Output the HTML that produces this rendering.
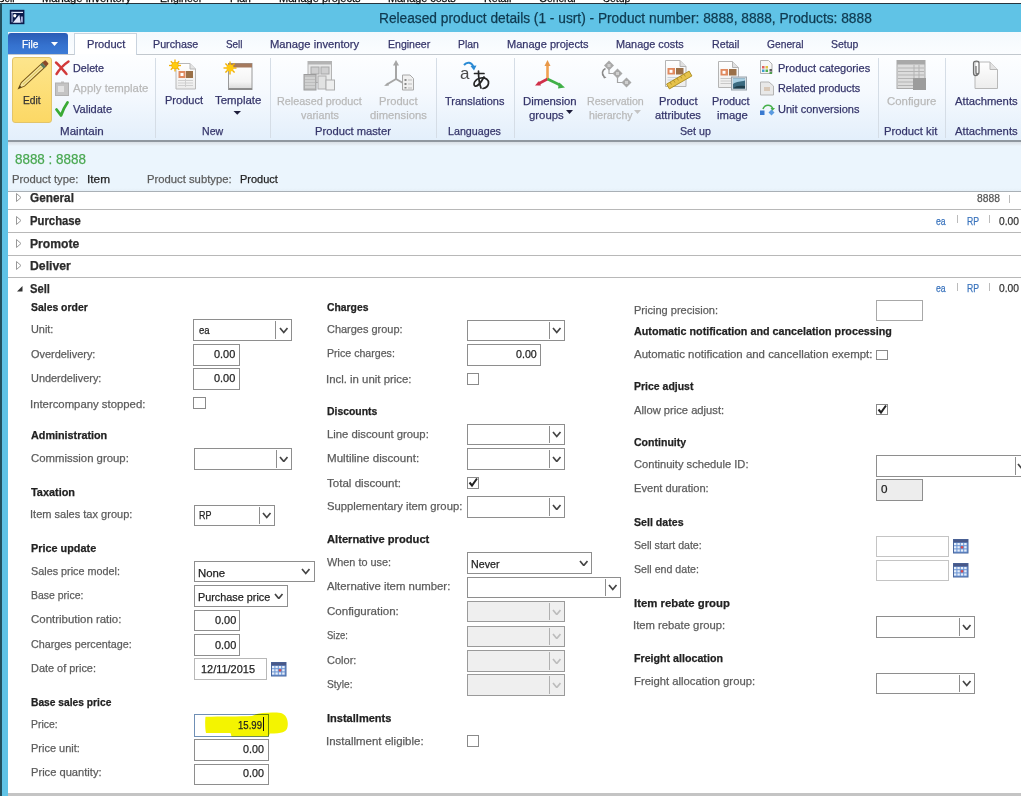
<!DOCTYPE html>
<html><head><meta charset="utf-8">
<style>
html,body{margin:0;padding:0;width:1024px;height:796px;overflow:hidden;background:#fff;position:relative;font-family:"Liberation Sans",sans-serif}
.t{position:absolute;white-space:nowrap;transform-origin:0 0;font-family:"Liberation Sans",sans-serif;-webkit-text-stroke:0.25px currentColor}
.a{position:absolute}
</style></head><body>
<!-- window frame -->
<div class="a" style="left:0;top:3px;width:1021px;height:1px;background:#26343c"></div>
<div class="a" style="left:0;top:4px;width:1021px;height:28px;background:#60c3e6"></div>
<div class="a" style="left:0;top:3px;width:1.5px;height:793px;background:#23505e"></div>
<div class="a" style="left:1.5px;top:4px;width:6px;height:792px;background:#60c3e6"></div>
<!-- tab strip -->
<div class="a" style="left:8px;top:32px;width:1013px;height:23px;background:linear-gradient(#f4f9fd,#fbfdff)"></div>
<div class="a" style="left:8px;top:54px;width:1013px;height:1.5px;background:#c2c8ce"></div>
<!-- ribbon body -->
<div class="a" style="left:8px;top:55px;width:1013px;height:85px;background:linear-gradient(#fdfeff 0%,#f5f9fe 45%,#e3effb 100%)"></div>
<div class="a" style="left:8px;top:140px;width:1013px;height:1.5px;background:#8f979f"></div>
<!-- header -->
<div class="a" style="left:8px;top:141.5px;width:1013px;height:50px;background:linear-gradient(#d9dfe5 0px,#e6eef5 3px,#ebf5fd 4px,#ebf5fd 46px,#e4eef6 50px)"></div>
<div class="a" style="left:8px;top:191px;width:1013px;height:1px;background:#a9b0b6"></div>
<!-- fasttab lines -->
<div class="a" style="left:8px;top:209px;width:1013px;height:1px;background:#b8b8b8"></div>
<div class="a" style="left:8px;top:232px;width:1013px;height:1px;background:#b8b8b8"></div>
<div class="a" style="left:8px;top:254.5px;width:1013px;height:1px;background:#b8b8b8"></div>
<div class="a" style="left:8px;top:277px;width:1013px;height:1px;background:#b8b8b8"></div>
<div class="a" style="left:8px;top:793px;width:1013px;height:3px;background:#c4c4c4"></div>
<!-- File button -->
<div class="a" style="left:8px;top:33px;width:60px;height:21px;background:linear-gradient(#2a5cb6,#3572cf 60%,#3b7ad6);border-radius:3px 3px 0 0"></div>
<svg class="a" style="left:51px;top:42px" width="8" height="5"><polygon points="0,0 7,0 3.5,4" fill="#fff"/></svg>
<!-- Product tab -->
<div class="a" style="left:73.5px;top:33px;width:63px;height:22px;background:#fff;border:1px solid #c9d3de;border-bottom:none;box-sizing:border-box"></div>
<div class="a" style="left:74.5px;top:54px;width:61px;height:2px;background:#fdfeff"></div>
<!-- Edit highlight -->
<div class="a" style="left:12px;top:57px;width:40px;height:66px;box-sizing:border-box;border:1px solid #e2c46a;border-radius:3px;background:linear-gradient(#fde58c,#fcd865)"></div>
<!-- group separators -->
<div class="a" style="left:155px;top:58px;width:1px;height:80px;background:#d5dde6"></div>
<div class="a" style="left:270px;top:58px;width:1px;height:80px;background:#d5dde6"></div>
<div class="a" style="left:436px;top:58px;width:1px;height:80px;background:#d5dde6"></div>
<div class="a" style="left:514px;top:58px;width:1px;height:80px;background:#d5dde6"></div>
<div class="a" style="left:878px;top:58px;width:1px;height:80px;background:#d5dde6"></div>
<div class="a" style="left:945px;top:58px;width:1px;height:80px;background:#d5dde6"></div>
<!-- title icon -->
<div class="a" style="left:10px;top:10px;width:14px;height:14px;background:#0f2347"></div>
<!-- right-side value separators -->
<div class="a" style="left:1008.5px;top:195px;width:1px;height:8px;background:#bbb"></div>
<div class="a" style="left:956.5px;top:215px;width:1px;height:8px;background:#bbb"></div>
<div class="a" style="left:989px;top:215px;width:1px;height:8px;background:#bbb"></div>
<div class="a" style="left:956.5px;top:283px;width:1px;height:8px;background:#bbb"></div>
<div class="a" style="left:989px;top:283px;width:1px;height:8px;background:#bbb"></div>
<!-- triangles -->
<svg class="a" style="left:16px;top:193px" width="6" height="9"><polygon points="0.5,0.5 5,4.5 0.5,8.5" fill="none" stroke="#999"/></svg>
<svg class="a" style="left:16px;top:216px" width="6" height="9"><polygon points="0.5,0.5 5,4.5 0.5,8.5" fill="none" stroke="#999"/></svg>
<svg class="a" style="left:16px;top:238.5px" width="6" height="9"><polygon points="0.5,0.5 5,4.5 0.5,8.5" fill="none" stroke="#999"/></svg>
<svg class="a" style="left:16px;top:261px" width="6" height="9"><polygon points="0.5,0.5 5,4.5 0.5,8.5" fill="none" stroke="#999"/></svg>
<svg class="a" style="left:16.5px;top:286px" width="6" height="6"><polygon points="5.5,0 5.5,5.5 0,5.5" fill="#333"/></svg>
<svg class="a" style="left:0;top:0" width="1024" height="141" viewBox="0 0 1024 141">
<defs>
<linearGradient id="docg" x1="0" y1="0" x2="0" y2="1"><stop offset="0" stop-color="#ffffff"/><stop offset="1" stop-color="#ececec"/></linearGradient>
<linearGradient id="tplg" x1="0" y1="0" x2="0" y2="1"><stop offset="0" stop-color="#ffffff"/><stop offset="0.7" stop-color="#f4f4f4"/><stop offset="1" stop-color="#d8d8d8"/></linearGradient>
<radialGradient id="starg"><stop offset="0" stop-color="#ffd21a"/><stop offset="1" stop-color="#f0a000"/></radialGradient>
</defs>
<!-- title icon -->
<rect x="9.8" y="9.8" width="14.6" height="14.4" fill="#0a1a4a"/>
<rect x="11.5" y="11.8" width="11.5" height="1.2" fill="#e6e9fb"/>
<rect x="11.5" y="11.8" width="1.1" height="10.5" fill="#b4bce4"/>
<circle cx="14.9" cy="15.8" r="1.7" fill="#ffffff"/>
<path d="M16.6,15.8 C16.6,18.5 15,20.5 12.8,21" fill="none" stroke="#0a1a4a" stroke-width="1"/>
<path d="M12.8,22.8 L19.3,14.8 L20.8,22.8 Z" fill="#e4e7fb"/>
<path d="M20.8,16.5 L22.8,16.5 L22.8,22.5 L21.2,22.5 Z" fill="#aab4e0"/>
<!-- pencil -->
<g transform="translate(18.5,88.5) rotate(-43)">
  <path d="M0,0 L6,-2.4 H36 V2.4 H6 Z" fill="#f6e6a0" stroke="#7a5a18" stroke-width="1"/>
  <path d="M0,0 L3,-1.2 V1.2 Z" fill="#4a3a10"/>
  <rect x="32" y="-2.6" width="3" height="5.2" fill="#5a7a60"/>
  <rect x="35" y="-2.6" width="4" height="5.2" rx="1" fill="#8a4a2a"/>
  <line x1="6" y1="0" x2="32" y2="0" stroke="#e0c860" stroke-width="1"/>
</g>
<!-- red X -->
<path d="M56,62.5 C60,66 63,70 66.5,74 M68.5,61.5 C64,64.5 60,68.5 56.5,74" fill="none" stroke="#d23a3a" stroke-width="2.4" stroke-linecap="round"/>
<!-- apply template (disabled) -->
<rect x="55.5" y="83" width="13" height="12.5" fill="#c4c4c4" stroke="#b0b0b0"/>
<rect x="58" y="86" width="6" height="6" fill="#e2e2e2"/>
<rect x="61" y="81.5" width="3" height="2" fill="#bcbcbc"/>
<!-- green check -->
<path d="M56.5,109.5 L61,115.5 C63,110 65,106 67.5,102.5" fill="none" stroke="#3aaa35" stroke-width="2.8" stroke-linecap="round" stroke-linejoin="round"/>
<!-- Product (new) -->
<path d="M176,63.5 H190 L195.5,69 V89 H176 Z" fill="url(#docg)" stroke="#b8b8b8"/>
<path d="M190,63.5 V69 H195.5" fill="#e4e4e4" stroke="#b8b8b8"/>
<rect x="178.5" y="71" width="7" height="7" fill="#e08a60"/>
<rect x="180.5" y="73" width="3" height="3" fill="#fff"/>
<rect x="186" y="71" width="7" height="7" fill="#9a7048"/>
<g stroke="#cfcfcf"><line x1="178" y1="80.5" x2="193" y2="80.5"/><line x1="178" y1="83" x2="193" y2="83"/><line x1="178" y1="85.5" x2="193" y2="85.5"/><line x1="185.5" y1="79" x2="185.5" y2="87"/></g>
<g transform="translate(175,65.5)"><circle r="3.6" fill="url(#starg)"/><g stroke="#f2b000" stroke-width="1.3"><line x1="0" y1="-6" x2="0" y2="6"/><line x1="-6" y1="0" x2="6" y2="0"/><line x1="-4.2" y1="-4.2" x2="4.2" y2="4.2"/><line x1="-4.2" y1="4.2" x2="4.2" y2="-4.2"/></g><circle r="3" fill="#ffcc10"/></g>
<!-- Template -->
<rect x="228.5" y="63.5" width="23.5" height="26" fill="url(#tplg)" stroke="#9a9a9a"/>
<rect x="228.5" y="63.5" width="23.5" height="4" fill="#a57a5e"/>
<rect x="229" y="88" width="23" height="2" fill="#8c8c8c"/>
<g transform="translate(230,68)"><g stroke="#f2b000" stroke-width="1.4"><line x1="0" y1="-6.5" x2="0" y2="6.5"/><line x1="-6.5" y1="0" x2="6.5" y2="0"/><line x1="-4.6" y1="-4.6" x2="4.6" y2="4.6"/><line x1="-4.6" y1="4.6" x2="4.6" y2="-4.6"/></g><circle r="3.6" fill="#ffc810"/></g>
<polygon points="233.5,111 241,111 237.25,114.8" fill="#1e1e3c"/>
<!-- Released product variants (gray) -->
<g opacity="0.85">
<rect x="308" y="61.5" width="23.5" height="21" fill="#e6e6e6" stroke="#a8a8a8"/>
<rect x="308" y="61.5" width="23.5" height="3" fill="#a8a8a8"/>
<rect x="311" y="67" width="8" height="7" fill="#c8c8c8" stroke="#9a9a9a"/>
<rect x="321" y="67" width="8" height="7" fill="#c8c8c8" stroke="#9a9a9a"/>
<rect x="304" y="74.5" width="12" height="15.5" fill="#b4b4b4" stroke="#8c8c8c"/>
<g stroke="#e0e0e0"><line x1="305" y1="78" x2="315" y2="78"/><line x1="305" y1="81" x2="315" y2="81"/><line x1="305" y1="84" x2="315" y2="84"/><line x1="305" y1="87" x2="315" y2="87"/></g>
<rect x="318" y="76" width="8" height="13" fill="#dedede" stroke="#a0a0a0"/>
<rect x="326" y="80" width="8.5" height="10" fill="#ececec" stroke="#a0a0a0"/>
</g>
<!-- Product dimensions (gray) -->
<g fill="none" stroke="#a6a6a6" stroke-width="2">
<line x1="396" y1="79" x2="396" y2="63"/><line x1="396" y1="79" x2="386" y2="85"/><line x1="396" y1="79" x2="403" y2="83"/>
</g>
<polygon points="396,60 393,65.5 399,65.5" fill="#a6a6a6"/>
<path d="M384,86 L388,82.5 L389,85.5 Z" fill="#a6a6a6"/>
<path d="M402.5,75 H410 L413.5,78.5 V90 H402.5 Z" fill="#f0f0f0" stroke="#a8a8a8"/>
<g fill="#8a8a8a"><rect x="404.5" y="79" width="2" height="2"/><rect x="404.5" y="83" width="2" height="2"/><rect x="404.5" y="87" width="2" height="1.5"/></g>
<g stroke="#bdbdbd"><line x1="408" y1="80" x2="412" y2="80"/><line x1="408" y1="84" x2="412" y2="84"/><line x1="408" y1="88" x2="412" y2="88"/></g>
<!-- Translations -->
<text x="460" y="79" font-family="Liberation Sans" font-size="17" fill="#4a4a4a">a</text>
<path d="M464,65 C467,61.5 471.5,62 473.5,67" fill="none" stroke="#2a8ad4" stroke-width="2"/>
<polygon points="470.5,66 476.5,65.5 474,70.5" fill="#2a8ad4"/>
<g fill="none" stroke="#262626" stroke-width="1.7" stroke-linecap="round">
<path d="M474.5,73.5 H484"/>
<path d="M478.5,71 C478.5,77 479,83 481,88"/>
<path d="M484,77 C481,82.5 477,87 475,86 C472.5,84.5 475,78.5 481,78 C486,77.5 489,80 488.5,83.5 C488,86.5 485.5,88 483,88.5"/>
</g>
<!-- Dimension groups -->
<line x1="547.5" y1="79" x2="547.5" y2="64" stroke="#f0a050" stroke-width="2.6"/>
<polygon points="547.5,60 544.5,66 550.5,66" fill="#e89848"/>
<line x1="547.5" y1="79" x2="538" y2="84" stroke="#d0304a" stroke-width="2.6"/>
<polygon points="535,85.5 539,81 541,85.5" fill="#d0304a"/>
<line x1="547.5" y1="79" x2="561" y2="85.5" stroke="#40b048" stroke-width="2.6"/>
<polygon points="565,87.5 559,82.5 558,88.5" fill="#40b048"/>
<!-- Reservation hierarchy (gray) -->
<g fill="none" stroke="#a4a4a4" stroke-width="1.2"><path d="M609,68 V73.5 H615"/><path d="M617.5,77 V82.5 H623"/></g>
<g fill="#a8a8a8"><polygon points="609,60.5 614,65.5 609,70.5 604,65.5"/><polygon points="617.5,68.5 622.5,73.5 617.5,78.5 612.5,73.5"/><polygon points="626.5,77.5 631.5,82.5 626.5,87.5 621.5,82.5"/></g>
<g fill="#cfcfcf"><rect x="607.5" y="64" width="3" height="3"/><rect x="616" y="72" width="3" height="3"/><rect x="625" y="81" width="3" height="3"/></g>
<path d="M605.5,68.5 C602,70 601.5,74 604,76" fill="none" stroke="#8a8a8a" stroke-width="1.6"/>
<polygon points="602,74.5 606.5,77.5 604,78.5" fill="#8a8a8a"/>
<!-- Product attributes -->
<path d="M665.5,60.5 H680 L686,66.5 V86.5 H665.5 Z" fill="url(#docg)" stroke="#b4b4b4"/>
<path d="M680,60.5 V66.5 H686" fill="#e0e0e0" stroke="#b4b4b4"/>
<rect x="667.5" y="68" width="7.5" height="6.5" fill="#e08a60"/>
<rect x="669.5" y="69.8" width="3" height="3" fill="#fff"/>
<rect x="676" y="68" width="7.5" height="6.5" fill="#9a7048"/>
<g stroke="#c8d2dc"><line x1="667.5" y1="77.5" x2="683" y2="77.5"/><line x1="667.5" y1="80" x2="683" y2="80"/></g>
<g transform="translate(668,86.5) rotate(-30)"><rect x="0" y="-2.8" width="26" height="5.6" fill="#e6c24a" stroke="#a88a20" stroke-width="0.8"/><g stroke="#9a7a20" stroke-width="0.6"><line x1="4" y1="-2.8" x2="4" y2="0"/><line x1="8" y1="-2.8" x2="8" y2="0"/><line x1="12" y1="-2.8" x2="12" y2="0"/><line x1="16" y1="-2.8" x2="16" y2="0"/><line x1="20" y1="-2.8" x2="20" y2="0"/></g></g>
<!-- Product image -->
<path d="M718.5,61.5 H732.5 L738.5,67.5 V87.5 H718.5 Z" fill="url(#docg)" stroke="#b4b4b4"/>
<path d="M732.5,61.5 V67.5 H738.5" fill="#e0e0e0" stroke="#b4b4b4"/>
<rect x="720.5" y="69" width="7.5" height="6.5" fill="#e08a60"/>
<rect x="722.5" y="70.8" width="3" height="3" fill="#fff"/>
<rect x="729" y="69" width="7.5" height="6.5" fill="#9a7048"/>
<g stroke="#c8c8c8"><line x1="720.5" y1="78.5" x2="731" y2="78.5"/><line x1="720.5" y1="81" x2="731" y2="81"/><line x1="720.5" y1="83.5" x2="731" y2="83.5"/></g>
<rect x="731.5" y="77" width="15" height="13" fill="#d4dde4" stroke="#9aa4ac"/>
<rect x="733" y="78.5" width="12" height="10" fill="#3a6a80"/>
<path d="M733,84 C737,81 740,82 745,80.5 V78.5 H733 Z" fill="#a8d0e4"/>
<path d="M733,88.5 C736,85 741,85.5 745,86 V88.5 Z" fill="#1e3e4c"/>
<!-- small icons -->
<path d="M760.5,60.5 H768.5 L772,64 V73.5 H760.5 Z" fill="#f6f6f6" stroke="#b0b0b0"/>
<rect x="762" y="66" width="2.5" height="2.5" fill="#e06060"/><rect x="765.5" y="66" width="2.5" height="2.5" fill="#e0c040"/>
<rect x="762" y="69.5" width="2.5" height="2.5" fill="#40a0d0"/><rect x="765.5" y="69.5" width="2.5" height="2.5" fill="#50b050"/>
<rect x="769.5" y="69" width="2.5" height="2.5" fill="#606060"/><rect x="769.5" y="72" width="2.5" height="2" fill="#50a050"/>
<path d="M760.5,82 H769 L773.5,86 V95 H760.5 Z" fill="#e8e8e8" stroke="#b4b4b4"/>
<rect x="764" y="87" width="6" height="4" fill="#d8c8b8"/>
<path d="M763,109 C765,104 771,104 773,109" fill="none" stroke="#46b04a" stroke-width="1.6"/>
<polygon points="770.5,108 775,108 772.5,111" fill="#46b04a"/>
<rect x="760" y="110.5" width="4.5" height="4.5" fill="#3a7ad0"/>
<polygon points="771.5,109.5 774.5,112.5 771.5,115.5 768.5,112.5" fill="#5a9ae0"/>
<!-- Configure (gray) -->
<rect x="897" y="60.5" width="28" height="28" fill="#dcdcdc" stroke="#a8a8a8"/>
<rect x="897" y="60.5" width="28" height="4" fill="#a8a8a8"/>
<g stroke="#b4b4b4"><line x1="898" y1="68" x2="924" y2="68"/><line x1="898" y1="71.5" x2="924" y2="71.5"/><line x1="898" y1="75" x2="924" y2="75"/><line x1="898" y1="78.5" x2="924" y2="78.5"/><line x1="898" y1="82" x2="924" y2="82"/><line x1="898" y1="85.5" x2="924" y2="85.5"/><line x1="914" y1="65" x2="914" y2="88"/><line x1="919" y1="65" x2="919" y2="88"/></g>
<rect x="913" y="78" width="13" height="12" fill="#9c9c9c"/>
<!-- Attachments -->
<path d="M975,62 H990 L997.5,69.5 V88.5 H975 Z" fill="url(#docg)" stroke="#b8b8b8"/>
<path d="M990,62 V69.5 H997.5" fill="#e4e4e4" stroke="#b8b8b8"/>
<path d="M976,66 V72 C976,75 979,75 979,72 V63 C979,60.5 974,60.5 973.5,63 V73 C973.5,76.5 978,76.5 978,73" fill="none" stroke="#6e6e6e" stroke-width="1.2"/>
</svg>

<svg class="a" style="left:565.5px;top:110px" width="8" height="5"><polygon points="0,0 7,0 3.5,4" fill="#1e1e3c"/></svg>
<svg class="a" style="left:634px;top:110px" width="8" height="5"><polygon points="0,0 7,0 3.5,4" fill="#c4c4c4"/></svg>
<div style="position:absolute;left:193.4px;top:319.4px;width:96.3px;height:20.1px;border:1px solid #8e8e8e;background:#fff"></div>
<div style="position:absolute;left:275.4px;top:321.4px;width:1px;height:18.1px;background:#8e8e8e"></div>
<svg style="position:absolute;left:278.8px;top:327.2px" width="9.5" height="6.5"><polyline points="1,1 4.75,5.5 8.5,1" fill="none" stroke="#444" stroke-width="1.7"/></svg>
<div style="position:absolute;left:193.4px;top:343.6px;width:45.0px;height:20.4px;border:1px solid #8e8e8e;background:#fff"></div>
<div style="position:absolute;left:193.4px;top:368.0px;width:45.0px;height:20.2px;border:1px solid #8e8e8e;background:#fff"></div>
<div style="position:absolute;left:193.4px;top:397.0px;width:10.5px;height:10.3px;border:1px solid #8a8a8a;background:#fff"></div>
<div style="position:absolute;left:193.5px;top:448.4px;width:96.4px;height:19.4px;border:1px solid #8e8e8e;background:#fff"></div>
<div style="position:absolute;left:275.5px;top:450.4px;width:1px;height:17.4px;background:#8e8e8e"></div>
<svg style="position:absolute;left:278.9px;top:455.9px" width="9.5" height="6.5"><polyline points="1,1 4.75,5.5 8.5,1" fill="none" stroke="#444" stroke-width="1.7"/></svg>
<div style="position:absolute;left:193.5px;top:505.0px;width:79.5px;height:19.0px;border:1px solid #8e8e8e;background:#fff"></div>
<div style="position:absolute;left:258.8px;top:507.0px;width:1px;height:17.0px;background:#8e8e8e"></div>
<svg style="position:absolute;left:262.1px;top:512.2px" width="9.5" height="6.5"><polyline points="1,1 4.75,5.5 8.5,1" fill="none" stroke="#444" stroke-width="1.7"/></svg>
<div style="position:absolute;left:193.5px;top:560.8px;width:119.0px;height:19.7px;border:1px solid #8e8e8e;background:#fff"></div>
<svg style="position:absolute;left:300.8px;top:568.4px" width="9.5" height="6.5"><polyline points="1,1 4.75,5.5 8.5,1" fill="none" stroke="#444" stroke-width="1.7"/></svg>
<div style="position:absolute;left:193.5px;top:585.4px;width:92.5px;height:19.4px;border:1px solid #8e8e8e;background:#fff"></div>
<svg style="position:absolute;left:274.2px;top:592.8px" width="9.5" height="6.5"><polyline points="1,1 4.75,5.5 8.5,1" fill="none" stroke="#444" stroke-width="1.7"/></svg>
<div style="position:absolute;left:193.5px;top:609.7px;width:44.8px;height:19.4px;border:1px solid #8e8e8e;background:#fff"></div>
<div style="position:absolute;left:193.5px;top:634.0px;width:44.8px;height:19.7px;border:1px solid #8e8e8e;background:#fff"></div>
<div style="position:absolute;left:193.5px;top:658.0px;width:71.2px;height:20.0px;border:1px solid #b8b8b8;background:#fff"></div>
<div style="position:absolute;left:193.5px;top:714.3px;width:73.0px;height:20.6px;border:1px solid #6f8fb5;background:transparent"></div>
<svg style="position:absolute;left:0;top:0;mix-blend-mode:multiply" width="300" height="745"><path d="M205.5,716.8 C220,716.5 240,716.5 252,716 C258,712.5 272,712 281,713 C287,715 288.5,721 287.5,727 C286.5,732 282,733.5 270,733.5 L268.5,736.5 L231.5,736.5 L230.5,733 L206,733 C205,729 205,721 205.5,716.8 Z" fill="#f4f400"/></svg>
<div style="position:absolute;left:262.5px;top:717.0px;width:1px;height:14.0px;background:#111"></div>
<div style="position:absolute;left:193.5px;top:739.2px;width:73.0px;height:19.4px;border:1px solid #8e8e8e;background:#fff"></div>
<div style="position:absolute;left:193.5px;top:763.5px;width:73.0px;height:19.7px;border:1px solid #8e8e8e;background:#fff"></div>
<div style="position:absolute;left:466.8px;top:319.6px;width:96.2px;height:19.9px;border:1px solid #8e8e8e;background:#fff"></div>
<div style="position:absolute;left:549.0px;top:321.6px;width:1px;height:17.9px;background:#8e8e8e"></div>
<svg style="position:absolute;left:552.2px;top:327.3px" width="9.5" height="6.5"><polyline points="1,1 4.75,5.5 8.5,1" fill="none" stroke="#444" stroke-width="1.7"/></svg>
<div style="position:absolute;left:466.8px;top:344.0px;width:72.6px;height:19.6px;border:1px solid #8e8e8e;background:#fff"></div>
<div style="position:absolute;left:466.8px;top:373.0px;width:10.4px;height:9.6px;border:1px solid #8a8a8a;background:#fff"></div>
<div style="position:absolute;left:466.8px;top:423.9px;width:96.2px;height:19.6px;border:1px solid #8e8e8e;background:#fff"></div>
<div style="position:absolute;left:549.0px;top:425.9px;width:1px;height:17.6px;background:#8e8e8e"></div>
<svg style="position:absolute;left:552.2px;top:431.4px" width="9.5" height="6.5"><polyline points="1,1 4.75,5.5 8.5,1" fill="none" stroke="#444" stroke-width="1.7"/></svg>
<div style="position:absolute;left:466.8px;top:448.0px;width:96.2px;height:19.6px;border:1px solid #8e8e8e;background:#fff"></div>
<div style="position:absolute;left:549.0px;top:450.0px;width:1px;height:17.6px;background:#8e8e8e"></div>
<svg style="position:absolute;left:552.2px;top:455.6px" width="9.5" height="6.5"><polyline points="1,1 4.75,5.5 8.5,1" fill="none" stroke="#444" stroke-width="1.7"/></svg>
<div style="position:absolute;left:466.8px;top:477.0px;width:10.4px;height:9.6px;border:1px solid #8a8a8a;background:#fff"></div>
<svg style="position:absolute;left:466.8px;top:476.0px" width="13" height="13"><polyline points="2.5,6.5 5,9.5 10,2.5" fill="none" stroke="#222" stroke-width="2"/></svg>
<div style="position:absolute;left:466.8px;top:496.3px;width:96.2px;height:19.5px;border:1px solid #8e8e8e;background:#fff"></div>
<div style="position:absolute;left:549.0px;top:498.3px;width:1px;height:17.5px;background:#8e8e8e"></div>
<svg style="position:absolute;left:552.2px;top:503.8px" width="9.5" height="6.5"><polyline points="1,1 4.75,5.5 8.5,1" fill="none" stroke="#444" stroke-width="1.7"/></svg>
<div style="position:absolute;left:466.8px;top:552.2px;width:123.7px;height:19.8px;border:1px solid #8e8e8e;background:#fff"></div>
<svg style="position:absolute;left:578.8px;top:559.9px" width="9.5" height="6.5"><polyline points="1,1 4.75,5.5 8.5,1" fill="none" stroke="#444" stroke-width="1.7"/></svg>
<div style="position:absolute;left:466.8px;top:576.5px;width:152.4px;height:19.8px;border:1px solid #8e8e8e;background:#fff"></div>
<div style="position:absolute;left:604.6px;top:578.5px;width:1px;height:17.8px;background:#8e8e8e"></div>
<svg style="position:absolute;left:608.2px;top:584.1px" width="9.5" height="6.5"><polyline points="1,1 4.75,5.5 8.5,1" fill="none" stroke="#444" stroke-width="1.7"/></svg>
<div style="position:absolute;left:466.8px;top:601.3px;width:95.8px;height:19.2px;border:1px solid #9a9a9a;background:#efefef"></div>
<div style="position:absolute;left:548.6px;top:603.3px;width:1px;height:17.2px;background:#b0b0b0"></div>
<svg style="position:absolute;left:551.9px;top:608.6px" width="9.5" height="6.5"><polyline points="1,1 4.75,5.5 8.5,1" fill="none" stroke="#bdbdbd" stroke-width="1.7"/></svg>
<div style="position:absolute;left:466.8px;top:625.5px;width:95.8px;height:19.2px;border:1px solid #9a9a9a;background:#efefef"></div>
<div style="position:absolute;left:548.6px;top:627.5px;width:1px;height:17.2px;background:#b0b0b0"></div>
<svg style="position:absolute;left:551.9px;top:632.9px" width="9.5" height="6.5"><polyline points="1,1 4.75,5.5 8.5,1" fill="none" stroke="#bdbdbd" stroke-width="1.7"/></svg>
<div style="position:absolute;left:466.8px;top:650.0px;width:95.8px;height:19.8px;border:1px solid #9a9a9a;background:#efefef"></div>
<div style="position:absolute;left:548.6px;top:652.0px;width:1px;height:17.8px;background:#b0b0b0"></div>
<svg style="position:absolute;left:551.9px;top:657.6px" width="9.5" height="6.5"><polyline points="1,1 4.75,5.5 8.5,1" fill="none" stroke="#bdbdbd" stroke-width="1.7"/></svg>
<div style="position:absolute;left:466.8px;top:674.2px;width:95.8px;height:19.8px;border:1px solid #9a9a9a;background:#efefef"></div>
<div style="position:absolute;left:548.6px;top:676.2px;width:1px;height:17.8px;background:#b0b0b0"></div>
<svg style="position:absolute;left:551.9px;top:681.9px" width="9.5" height="6.5"><polyline points="1,1 4.75,5.5 8.5,1" fill="none" stroke="#bdbdbd" stroke-width="1.7"/></svg>
<div style="position:absolute;left:466.8px;top:735.4px;width:10.2px;height:10.1px;border:1px solid #8a8a8a;background:#fff"></div>
<div style="position:absolute;left:876.3px;top:299.7px;width:44.9px;height:19.5px;border:1px solid #a8a8a8;background:#fff"></div>
<div style="position:absolute;left:876.3px;top:349.6px;width:9.5px;height:8.6px;border:1px solid #8a8a8a;background:#fff"></div>
<div style="position:absolute;left:876.3px;top:404.4px;width:9.7px;height:8.6px;border:1px solid #8a8a8a;background:#fff"></div>
<svg style="position:absolute;left:876.3px;top:403.4px" width="13" height="13"><polyline points="2.5,6.5 5,9.5 10,2.5" fill="none" stroke="#222" stroke-width="2"/></svg>
<div style="position:absolute;left:876.4px;top:455.0px;width:151.6px;height:19.5px;border:1px solid #8e8e8e;background:#fff"></div>
<div style="position:absolute;left:1014.7px;top:457.0px;width:1px;height:17.5px;background:#8e8e8e"></div>
<svg style="position:absolute;left:1016.8px;top:462.8px" width="9.5" height="6.5"><polyline points="1,1 4.75,5.5 8.5,1" fill="none" stroke="#444" stroke-width="1.7"/></svg>
<div style="position:absolute;left:876.4px;top:478.5px;width:44.7px;height:20.5px;border:1px solid #8e8e8e;background:#ededed"></div>
<div style="position:absolute;left:876.4px;top:535.7px;width:70.8px;height:19.5px;border:1px solid #c4c4c4;background:#fff"></div>
<div style="position:absolute;left:876.4px;top:559.5px;width:70.8px;height:19.5px;border:1px solid #c4c4c4;background:#fff"></div>
<div style="position:absolute;left:876.4px;top:616.2px;width:96.2px;height:19.4px;border:1px solid #8e8e8e;background:#fff"></div>
<div style="position:absolute;left:959.0px;top:618.2px;width:1px;height:17.4px;background:#8e8e8e"></div>
<svg style="position:absolute;left:962.0px;top:623.7px" width="9.5" height="6.5"><polyline points="1,1 4.75,5.5 8.5,1" fill="none" stroke="#444" stroke-width="1.7"/></svg>
<div style="position:absolute;left:876.4px;top:672.7px;width:96.2px;height:19.4px;border:1px solid #8e8e8e;background:#fff"></div>
<div style="position:absolute;left:959.0px;top:674.7px;width:1px;height:17.4px;background:#8e8e8e"></div>
<svg style="position:absolute;left:962.0px;top:680.2px" width="9.5" height="6.5"><polyline points="1,1 4.75,5.5 8.5,1" fill="none" stroke="#444" stroke-width="1.7"/></svg>
<svg style="position:absolute;left:270.9px;top:662.2px" width="16" height="15"><rect x="0.5" y="0.5" width="14.5" height="13.5" fill="#6a94d4" stroke="#4a68a0" stroke-width="1"/><rect x="0.5" y="0.5" width="14.5" height="3" fill="#485888"/><rect x="1.0" y="4.0" width="2.4" height="2.2" fill="#e6eef9"/><rect x="1.0" y="7.2" width="2.4" height="2.2" fill="#e6eef9"/><rect x="1.0" y="10.4" width="2.4" height="2.2" fill="#e6eef9"/><rect x="4.4" y="4.0" width="2.4" height="2.2" fill="#e6eef9"/><rect x="4.4" y="7.2" width="2.4" height="2.2" fill="#e6eef9"/><rect x="4.4" y="10.4" width="2.4" height="2.2" fill="#e6eef9"/><rect x="7.8" y="4.0" width="2.4" height="2.2" fill="#e6eef9"/><rect x="7.8" y="7.2" width="2.4" height="2.2" fill="#e04848"/><rect x="7.8" y="10.4" width="2.4" height="2.2" fill="#e6eef9"/><rect x="11.2" y="4.0" width="2.4" height="2.2" fill="#e6eef9"/><rect x="11.2" y="7.2" width="2.4" height="2.2" fill="#e6eef9"/><rect x="11.2" y="10.4" width="2.4" height="2.2" fill="#e6eef9"/></svg>
<svg style="position:absolute;left:952.6px;top:538.6px" width="16" height="15"><rect x="0.5" y="0.5" width="14.5" height="13.5" fill="#6a94d4" stroke="#4a68a0" stroke-width="1"/><rect x="0.5" y="0.5" width="14.5" height="3" fill="#485888"/><rect x="1.0" y="4.0" width="2.4" height="2.2" fill="#e6eef9"/><rect x="1.0" y="7.2" width="2.4" height="2.2" fill="#e6eef9"/><rect x="1.0" y="10.4" width="2.4" height="2.2" fill="#e6eef9"/><rect x="4.4" y="4.0" width="2.4" height="2.2" fill="#e6eef9"/><rect x="4.4" y="7.2" width="2.4" height="2.2" fill="#e6eef9"/><rect x="4.4" y="10.4" width="2.4" height="2.2" fill="#e6eef9"/><rect x="7.8" y="4.0" width="2.4" height="2.2" fill="#e6eef9"/><rect x="7.8" y="7.2" width="2.4" height="2.2" fill="#e04848"/><rect x="7.8" y="10.4" width="2.4" height="2.2" fill="#e6eef9"/><rect x="11.2" y="4.0" width="2.4" height="2.2" fill="#e6eef9"/><rect x="11.2" y="7.2" width="2.4" height="2.2" fill="#e6eef9"/><rect x="11.2" y="10.4" width="2.4" height="2.2" fill="#e6eef9"/></svg>
<svg style="position:absolute;left:952.6px;top:562.6px" width="16" height="15"><rect x="0.5" y="0.5" width="14.5" height="13.5" fill="#6a94d4" stroke="#4a68a0" stroke-width="1"/><rect x="0.5" y="0.5" width="14.5" height="3" fill="#485888"/><rect x="1.0" y="4.0" width="2.4" height="2.2" fill="#e6eef9"/><rect x="1.0" y="7.2" width="2.4" height="2.2" fill="#e6eef9"/><rect x="1.0" y="10.4" width="2.4" height="2.2" fill="#e6eef9"/><rect x="4.4" y="4.0" width="2.4" height="2.2" fill="#e6eef9"/><rect x="4.4" y="7.2" width="2.4" height="2.2" fill="#e6eef9"/><rect x="4.4" y="10.4" width="2.4" height="2.2" fill="#e6eef9"/><rect x="7.8" y="4.0" width="2.4" height="2.2" fill="#e6eef9"/><rect x="7.8" y="7.2" width="2.4" height="2.2" fill="#e04848"/><rect x="7.8" y="10.4" width="2.4" height="2.2" fill="#e6eef9"/><rect x="11.2" y="4.0" width="2.4" height="2.2" fill="#e6eef9"/><rect x="11.2" y="7.2" width="2.4" height="2.2" fill="#e6eef9"/><rect x="11.2" y="10.4" width="2.4" height="2.2" fill="#e6eef9"/></svg>
<div class="t" style="left:-2.40px;top:-6.93px;font-size:11.5px;line-height:11.5px;font-weight:normal;color:#000;transform:scaleX(0.8592);">Sell</div>
<div class="t" style="left:42.30px;top:-6.93px;font-size:11.5px;line-height:11.5px;font-weight:normal;color:#000;transform:scaleX(0.9753);">Manage inventory</div>
<div class="t" style="left:159.60px;top:-6.93px;font-size:11.5px;line-height:11.5px;font-weight:normal;color:#000;transform:scaleX(0.9177);">Engineer</div>
<div class="t" style="left:230.00px;top:-6.93px;font-size:11.5px;line-height:11.5px;font-weight:normal;color:#000;transform:scaleX(0.9062);">Plan</div>
<div class="t" style="left:279.00px;top:-6.93px;font-size:11.5px;line-height:11.5px;font-weight:normal;color:#000;transform:scaleX(0.9587);">Manage projects</div>
<div class="t" style="left:388.00px;top:-6.93px;font-size:11.5px;line-height:11.5px;font-weight:normal;color:#000;transform:scaleX(0.9465);">Manage costs</div>
<div class="t" style="left:484.00px;top:-6.93px;font-size:11.5px;line-height:11.5px;font-weight:normal;color:#000;transform:scaleX(0.9273);">Retail</div>
<div class="t" style="left:539.00px;top:-6.93px;font-size:11.5px;line-height:11.5px;font-weight:normal;color:#000;transform:scaleX(0.8920);">General</div>
<div class="t" style="left:603.00px;top:-6.93px;font-size:11.5px;line-height:11.5px;font-weight:normal;color:#000;transform:scaleX(0.9104);">Setup</div>
<div class="t" style="left:379.02px;top:10.75px;font-size:14px;line-height:14px;font-weight:normal;color:#0f3a50;transform:scaleX(0.9802);">Released product details (1 - usrt) - Product number: 8888, 8888, Products: 8888</div>
<div class="t" style="left:22.00px;top:39.27px;font-size:11.5px;line-height:11.5px;font-weight:normal;color:#ffffff;transform:scaleX(0.8823);">File</div>
<div class="t" style="left:87.00px;top:39.27px;font-size:11.5px;line-height:11.5px;font-weight:normal;color:#35356a;transform:scaleX(0.9645);">Product</div>
<div class="t" style="left:153.40px;top:39.27px;font-size:11.5px;line-height:11.5px;font-weight:normal;color:#35356a;transform:scaleX(0.9318);">Purchase</div>
<div class="t" style="left:225.60px;top:39.27px;font-size:11.5px;line-height:11.5px;font-weight:normal;color:#35356a;transform:scaleX(0.8592);">Sell</div>
<div class="t" style="left:270.30px;top:39.27px;font-size:11.5px;line-height:11.5px;font-weight:normal;color:#35356a;transform:scaleX(0.9753);">Manage inventory</div>
<div class="t" style="left:387.60px;top:39.27px;font-size:11.5px;line-height:11.5px;font-weight:normal;color:#35356a;transform:scaleX(0.9177);">Engineer</div>
<div class="t" style="left:458.00px;top:39.27px;font-size:11.5px;line-height:11.5px;font-weight:normal;color:#35356a;transform:scaleX(0.9062);">Plan</div>
<div class="t" style="left:507.00px;top:39.27px;font-size:11.5px;line-height:11.5px;font-weight:normal;color:#35356a;transform:scaleX(0.9587);">Manage projects</div>
<div class="t" style="left:616.00px;top:39.27px;font-size:11.5px;line-height:11.5px;font-weight:normal;color:#35356a;transform:scaleX(0.9465);">Manage costs</div>
<div class="t" style="left:712.00px;top:39.27px;font-size:11.5px;line-height:11.5px;font-weight:normal;color:#35356a;transform:scaleX(0.9273);">Retail</div>
<div class="t" style="left:767.00px;top:39.27px;font-size:11.5px;line-height:11.5px;font-weight:normal;color:#35356a;transform:scaleX(0.8920);">General</div>
<div class="t" style="left:831.00px;top:39.27px;font-size:11.5px;line-height:11.5px;font-weight:normal;color:#35356a;transform:scaleX(0.9104);">Setup</div>
<div class="t" style="left:23.00px;top:95.47px;font-size:11.5px;line-height:11.5px;font-weight:normal;color:#333;transform:scaleX(0.8923);">Edit</div>
<div class="t" style="left:72.70px;top:63.17px;font-size:11.5px;line-height:11.5px;font-weight:normal;color:#35356a;transform:scaleX(0.9347);">Delete</div>
<div class="t" style="left:73.00px;top:82.97px;font-size:11.5px;line-height:11.5px;font-weight:normal;color:#b9b9b9;transform:scaleX(0.9911);">Apply template</div>
<div class="t" style="left:73.00px;top:103.77px;font-size:11.5px;line-height:11.5px;font-weight:normal;color:#35356a;transform:scaleX(0.9601);">Validate</div>
<div class="t" style="left:59.70px;top:126.27px;font-size:11.5px;line-height:11.5px;font-weight:normal;color:#35356a;transform:scaleX(1.0053);">Maintain</div>
<div class="t" style="left:164.80px;top:95.47px;font-size:11.5px;line-height:11.5px;font-weight:normal;color:#35356a;transform:scaleX(0.9595);">Product</div>
<div class="t" style="left:215.30px;top:95.47px;font-size:11.5px;line-height:11.5px;font-weight:normal;color:#35356a;transform:scaleX(0.9932);">Template</div>
<div class="t" style="left:201.60px;top:126.27px;font-size:11.5px;line-height:11.5px;font-weight:normal;color:#35356a;transform:scaleX(0.9198);">New</div>
<div class="t" style="left:277.30px;top:95.87px;font-size:11.5px;line-height:11.5px;font-weight:normal;color:#b9b9b9;transform:scaleX(0.9401);">Released product</div>
<div class="t" style="left:300.60px;top:109.77px;font-size:11.5px;line-height:11.5px;font-weight:normal;color:#b9b9b9;transform:scaleX(0.9403);">variants</div>
<div class="t" style="left:379.30px;top:95.87px;font-size:11.5px;line-height:11.5px;font-weight:normal;color:#b9b9b9;transform:scaleX(0.9719);">Product</div>
<div class="t" style="left:370.40px;top:109.77px;font-size:11.5px;line-height:11.5px;font-weight:normal;color:#b9b9b9;transform:scaleX(0.9774);">dimensions</div>
<div class="t" style="left:314.60px;top:126.27px;font-size:11.5px;line-height:11.5px;font-weight:normal;color:#35356a;transform:scaleX(0.9738);">Product master</div>
<div class="t" style="left:445.30px;top:95.87px;font-size:11.5px;line-height:11.5px;font-weight:normal;color:#35356a;transform:scaleX(0.9558);">Translations</div>
<div class="t" style="left:447.80px;top:126.27px;font-size:11.5px;line-height:11.5px;font-weight:normal;color:#35356a;transform:scaleX(0.9306);">Languages</div>
<div class="t" style="left:523.20px;top:95.87px;font-size:11.5px;line-height:11.5px;font-weight:normal;color:#35356a;transform:scaleX(0.9883);">Dimension</div>
<div class="t" style="left:529.00px;top:109.77px;font-size:11.5px;line-height:11.5px;font-weight:normal;color:#35356a;transform:scaleX(0.9883);">groups</div>
<div class="t" style="left:587.40px;top:95.87px;font-size:11.5px;line-height:11.5px;font-weight:normal;color:#b9b9b9;transform:scaleX(0.9251);">Reservation</div>
<div class="t" style="left:589.20px;top:109.77px;font-size:11.5px;line-height:11.5px;font-weight:normal;color:#b9b9b9;transform:scaleX(0.9212);">hierarchy</div>
<div class="t" style="left:658.50px;top:95.87px;font-size:11.5px;line-height:11.5px;font-weight:normal;color:#35356a;transform:scaleX(0.9719);">Product</div>
<div class="t" style="left:654.70px;top:109.77px;font-size:11.5px;line-height:11.5px;font-weight:normal;color:#35356a;transform:scaleX(0.9716);">attributes</div>
<div class="t" style="left:712.30px;top:95.87px;font-size:11.5px;line-height:11.5px;font-weight:normal;color:#35356a;transform:scaleX(0.9471);">Product</div>
<div class="t" style="left:716.90px;top:109.77px;font-size:11.5px;line-height:11.5px;font-weight:normal;color:#35356a;transform:scaleX(0.9830);">image</div>
<div class="t" style="left:680.00px;top:126.27px;font-size:11.5px;line-height:11.5px;font-weight:normal;color:#35356a;transform:scaleX(0.9284);">Set up</div>
<div class="t" style="left:778.00px;top:62.67px;font-size:11.5px;line-height:11.5px;font-weight:normal;color:#35356a;transform:scaleX(0.9611);">Product categories</div>
<div class="t" style="left:778.00px;top:83.27px;font-size:11.5px;line-height:11.5px;font-weight:normal;color:#35356a;transform:scaleX(0.9462);">Related products</div>
<div class="t" style="left:778.00px;top:104.17px;font-size:11.5px;line-height:11.5px;font-weight:normal;color:#35356a;transform:scaleX(0.9583);">Unit conversions</div>
<div class="t" style="left:887.00px;top:95.57px;font-size:11.5px;line-height:11.5px;font-weight:normal;color:#b9b9b9;transform:scaleX(0.9905);">Configure</div>
<div class="t" style="left:954.70px;top:95.57px;font-size:11.5px;line-height:11.5px;font-weight:normal;color:#35356a;transform:scaleX(0.9802);">Attachments</div>
<div class="t" style="left:883.80px;top:126.27px;font-size:11.5px;line-height:11.5px;font-weight:normal;color:#35356a;transform:scaleX(0.9813);">Product kit</div>
<div class="t" style="left:954.70px;top:126.27px;font-size:11.5px;line-height:11.5px;font-weight:normal;color:#35356a;transform:scaleX(0.9802);">Attachments</div>
<div class="t" style="left:15.20px;top:151.38px;font-size:15.5px;line-height:15.5px;font-weight:normal;color:#4aa852;transform:scaleX(0.8651);">8888 : 8888</div>
<div class="t" style="left:12.30px;top:173.77px;font-size:11.5px;line-height:11.5px;font-weight:normal;color:#5c5c5c;transform:scaleX(0.9798);">Product type:</div>
<div class="t" style="left:86.87px;top:174.27px;font-size:11.5px;line-height:11.5px;font-weight:normal;color:#222;transform:scaleX(1.0295);">Item</div>
<div class="t" style="left:146.50px;top:173.77px;font-size:11.5px;line-height:11.5px;font-weight:normal;color:#5c5c5c;transform:scaleX(0.9802);">Product subtype:</div>
<div class="t" style="left:239.70px;top:174.27px;font-size:11.5px;line-height:11.5px;font-weight:normal;color:#222;transform:scaleX(0.9546);">Product</div>
<div class="t" style="left:30.40px;top:191.74px;font-size:12px;line-height:12px;font-weight:bold;color:#2b2b2b;transform:scaleX(0.9830);">General</div>
<div class="t" style="left:30.40px;top:215.04px;font-size:12px;line-height:12px;font-weight:bold;color:#2b2b2b;transform:scaleX(0.9419);">Purchase</div>
<div class="t" style="left:30.40px;top:237.64px;font-size:12px;line-height:12px;font-weight:bold;color:#2b2b2b;transform:scaleX(1.0122);">Promote</div>
<div class="t" style="left:30.40px;top:260.14px;font-size:12px;line-height:12px;font-weight:bold;color:#2b2b2b;transform:scaleX(1.0209);">Deliver</div>
<div class="t" style="left:30.40px;top:282.84px;font-size:12px;line-height:12px;font-weight:bold;color:#2b2b2b;transform:scaleX(0.9328);">Sell</div>
<div class="t" style="left:976.50px;top:192.97px;font-size:11.5px;line-height:11.5px;font-weight:normal;color:#555;transform:scaleX(0.8933);">8888</div>
<div class="t" style="left:935.90px;top:215.97px;font-size:11.5px;line-height:11.5px;font-weight:normal;color:#3b74bd;transform:scaleX(0.7540);">ea</div>
<div class="t" style="left:966.80px;top:215.97px;font-size:11.5px;line-height:11.5px;font-weight:normal;color:#3b74bd;transform:scaleX(0.7544);">RP</div>
<div class="t" style="left:999.20px;top:215.97px;font-size:11.5px;line-height:11.5px;font-weight:normal;color:#333;transform:scaleX(0.8915);">0.00</div>
<div class="t" style="left:935.90px;top:283.27px;font-size:11.5px;line-height:11.5px;font-weight:normal;color:#3b74bd;transform:scaleX(0.7540);">ea</div>
<div class="t" style="left:966.80px;top:283.27px;font-size:11.5px;line-height:11.5px;font-weight:normal;color:#3b74bd;transform:scaleX(0.7544);">RP</div>
<div class="t" style="left:999.20px;top:283.27px;font-size:11.5px;line-height:11.5px;font-weight:normal;color:#333;transform:scaleX(0.8915);">0.00</div>
<div class="t" style="left:30.80px;top:302.27px;font-size:11.5px;line-height:11.5px;font-weight:bold;color:#222;transform:scaleX(0.9055);">Sales order</div>
<div class="t" style="left:30.80px;top:324.27px;font-size:11.5px;line-height:11.5px;font-weight:normal;color:#5c5c5c;transform:scaleX(0.9467);">Unit:</div>
<div class="t" style="left:30.80px;top:349.07px;font-size:11.5px;line-height:11.5px;font-weight:normal;color:#5c5c5c;transform:scaleX(0.9504);">Overdelivery:</div>
<div class="t" style="left:30.80px;top:373.27px;font-size:11.5px;line-height:11.5px;font-weight:normal;color:#5c5c5c;transform:scaleX(0.9493);">Underdelivery:</div>
<div class="t" style="left:29.81px;top:398.77px;font-size:11.5px;line-height:11.5px;font-weight:normal;color:#5c5c5c;transform:scaleX(0.9862);">Intercompany stopped:</div>
<div class="t" style="left:30.80px;top:430.27px;font-size:11.5px;line-height:11.5px;font-weight:bold;color:#222;transform:scaleX(0.9394);">Administration</div>
<div class="t" style="left:30.80px;top:453.27px;font-size:11.5px;line-height:11.5px;font-weight:normal;color:#5c5c5c;transform:scaleX(0.9872);">Commission group:</div>
<div class="t" style="left:30.80px;top:486.87px;font-size:11.5px;line-height:11.5px;font-weight:bold;color:#222;transform:scaleX(0.9481);">Taxation</div>
<div class="t" style="left:29.84px;top:509.27px;font-size:11.5px;line-height:11.5px;font-weight:normal;color:#5c5c5c;transform:scaleX(0.9588);">Item sales tax group:</div>
<div class="t" style="left:30.80px;top:542.97px;font-size:11.5px;line-height:11.5px;font-weight:bold;color:#222;transform:scaleX(0.9442);">Price update</div>
<div class="t" style="left:30.80px;top:565.87px;font-size:11.5px;line-height:11.5px;font-weight:normal;color:#5c5c5c;transform:scaleX(0.9406);">Sales price model:</div>
<div class="t" style="left:30.80px;top:590.17px;font-size:11.5px;line-height:11.5px;font-weight:normal;color:#5c5c5c;transform:scaleX(0.9105);">Base price:</div>
<div class="t" style="left:30.80px;top:614.17px;font-size:11.5px;line-height:11.5px;font-weight:normal;color:#5c5c5c;transform:scaleX(0.9959);">Contribution ratio:</div>
<div class="t" style="left:30.80px;top:639.07px;font-size:11.5px;line-height:11.5px;font-weight:normal;color:#5c5c5c;transform:scaleX(0.9374);">Charges percentage:</div>
<div class="t" style="left:30.80px;top:663.37px;font-size:11.5px;line-height:11.5px;font-weight:normal;color:#5c5c5c;transform:scaleX(0.9502);">Date of price:</div>
<div class="t" style="left:30.80px;top:696.77px;font-size:11.5px;line-height:11.5px;font-weight:bold;color:#222;transform:scaleX(0.8914);">Base sales price</div>
<div class="t" style="left:30.80px;top:718.77px;font-size:11.5px;line-height:11.5px;font-weight:normal;color:#5c5c5c;transform:scaleX(0.9041);">Price:</div>
<div class="t" style="left:30.80px;top:743.07px;font-size:11.5px;line-height:11.5px;font-weight:normal;color:#5c5c5c;transform:scaleX(0.9561);">Price unit:</div>
<div class="t" style="left:30.80px;top:767.07px;font-size:11.5px;line-height:11.5px;font-weight:normal;color:#5c5c5c;transform:scaleX(0.9687);">Price quantity:</div>
<div class="t" style="left:327.10px;top:301.97px;font-size:11.5px;line-height:11.5px;font-weight:bold;color:#222;transform:scaleX(0.9009);">Charges</div>
<div class="t" style="left:327.10px;top:324.37px;font-size:11.5px;line-height:11.5px;font-weight:normal;color:#5c5c5c;transform:scaleX(0.9535);">Charges group:</div>
<div class="t" style="left:327.10px;top:348.47px;font-size:11.5px;line-height:11.5px;font-weight:normal;color:#5c5c5c;transform:scaleX(0.9235);">Price charges:</div>
<div class="t" style="left:326.11px;top:373.87px;font-size:11.5px;line-height:11.5px;font-weight:normal;color:#5c5c5c;transform:scaleX(0.9907);">Incl. in unit price:</div>
<div class="t" style="left:327.10px;top:405.57px;font-size:11.5px;line-height:11.5px;font-weight:bold;color:#222;transform:scaleX(0.9041);">Discounts</div>
<div class="t" style="left:327.10px;top:428.57px;font-size:11.5px;line-height:11.5px;font-weight:normal;color:#5c5c5c;transform:scaleX(0.9828);">Line discount group:</div>
<div class="t" style="left:327.10px;top:453.27px;font-size:11.5px;line-height:11.5px;font-weight:normal;color:#5c5c5c;transform:scaleX(1.0076);">Multiline discount:</div>
<div class="t" style="left:327.10px;top:477.87px;font-size:11.5px;line-height:11.5px;font-weight:normal;color:#5c5c5c;transform:scaleX(1.0052);">Total discount:</div>
<div class="t" style="left:327.10px;top:500.77px;font-size:11.5px;line-height:11.5px;font-weight:normal;color:#5c5c5c;transform:scaleX(0.9799);">Supplementary item group:</div>
<div class="t" style="left:327.10px;top:533.77px;font-size:11.5px;line-height:11.5px;font-weight:bold;color:#222;transform:scaleX(0.9706);">Alternative product</div>
<div class="t" style="left:327.10px;top:557.17px;font-size:11.5px;line-height:11.5px;font-weight:normal;color:#5c5c5c;transform:scaleX(0.9458);">When to use:</div>
<div class="t" style="left:327.10px;top:581.37px;font-size:11.5px;line-height:11.5px;font-weight:normal;color:#5c5c5c;transform:scaleX(0.9892);">Alternative item number:</div>
<div class="t" style="left:327.10px;top:605.57px;font-size:11.5px;line-height:11.5px;font-weight:normal;color:#5c5c5c;transform:scaleX(1.0027);">Configuration:</div>
<div class="t" style="left:327.10px;top:629.77px;font-size:11.5px;line-height:11.5px;font-weight:normal;color:#5c5c5c;transform:scaleX(0.8198);">Size:</div>
<div class="t" style="left:327.10px;top:654.87px;font-size:11.5px;line-height:11.5px;font-weight:normal;color:#5c5c5c;transform:scaleX(0.9580);">Color:</div>
<div class="t" style="left:327.10px;top:679.07px;font-size:11.5px;line-height:11.5px;font-weight:normal;color:#5c5c5c;transform:scaleX(0.8857);">Style:</div>
<div class="t" style="left:327.10px;top:712.97px;font-size:11.5px;line-height:11.5px;font-weight:bold;color:#222;transform:scaleX(0.9594);">Installments</div>
<div class="t" style="left:326.10px;top:735.67px;font-size:11.5px;line-height:11.5px;font-weight:normal;color:#5c5c5c;transform:scaleX(0.9979);">Installment eligible:</div>
<div class="t" style="left:633.50px;top:304.87px;font-size:11.5px;line-height:11.5px;font-weight:normal;color:#5c5c5c;transform:scaleX(0.9592);">Pricing precision:</div>
<div class="t" style="left:633.50px;top:326.07px;font-size:11.5px;line-height:11.5px;font-weight:bold;color:#222;transform:scaleX(0.9344);">Automatic notification and cancelation processing</div>
<div class="t" style="left:633.50px;top:349.37px;font-size:11.5px;line-height:11.5px;font-weight:normal;color:#5c5c5c;transform:scaleX(0.9945);">Automatic notification and cancellation exempt:</div>
<div class="t" style="left:633.50px;top:381.27px;font-size:11.5px;line-height:11.5px;font-weight:bold;color:#222;transform:scaleX(0.9118);">Price adjust</div>
<div class="t" style="left:633.50px;top:404.77px;font-size:11.5px;line-height:11.5px;font-weight:normal;color:#5c5c5c;transform:scaleX(0.9721);">Allow price adjust:</div>
<div class="t" style="left:633.50px;top:436.57px;font-size:11.5px;line-height:11.5px;font-weight:bold;color:#222;transform:scaleX(0.9173);">Continuity</div>
<div class="t" style="left:633.50px;top:459.27px;font-size:11.5px;line-height:11.5px;font-weight:normal;color:#5c5c5c;transform:scaleX(0.9681);">Continuity schedule ID:</div>
<div class="t" style="left:633.50px;top:483.37px;font-size:11.5px;line-height:11.5px;font-weight:normal;color:#5c5c5c;transform:scaleX(0.9655);">Event duration:</div>
<div class="t" style="left:633.50px;top:517.27px;font-size:11.5px;line-height:11.5px;font-weight:bold;color:#222;transform:scaleX(0.9231);">Sell dates</div>
<div class="t" style="left:633.50px;top:539.87px;font-size:11.5px;line-height:11.5px;font-weight:normal;color:#5c5c5c;transform:scaleX(0.9207);">Sell start date:</div>
<div class="t" style="left:633.50px;top:564.07px;font-size:11.5px;line-height:11.5px;font-weight:normal;color:#5c5c5c;transform:scaleX(0.9239);">Sell end date:</div>
<div class="t" style="left:633.50px;top:597.67px;font-size:11.5px;line-height:11.5px;font-weight:bold;color:#222;transform:scaleX(0.9876);">Item rebate group</div>
<div class="t" style="left:632.52px;top:619.87px;font-size:11.5px;line-height:11.5px;font-weight:normal;color:#5c5c5c;transform:scaleX(0.9798);">Item rebate group:</div>
<div class="t" style="left:633.50px;top:653.47px;font-size:11.5px;line-height:11.5px;font-weight:bold;color:#222;transform:scaleX(0.9278);">Freight allocation</div>
<div class="t" style="left:633.50px;top:675.67px;font-size:11.5px;line-height:11.5px;font-weight:normal;color:#5c5c5c;transform:scaleX(0.9815);">Freight allocation group:</div>
<div class="t" style="left:199.40px;top:324.77px;font-size:11.5px;line-height:11.5px;font-weight:normal;color:#222;transform:scaleX(0.8286);">ea</div>
<div class="t" style="left:214.00px;top:348.97px;font-size:11.5px;line-height:11.5px;font-weight:normal;color:#222;transform:scaleX(0.9506);">0.00</div>
<div class="t" style="left:214.00px;top:373.27px;font-size:11.5px;line-height:11.5px;font-weight:normal;color:#222;transform:scaleX(0.9506);">0.00</div>
<div class="t" style="left:199.30px;top:509.77px;font-size:11.5px;line-height:11.5px;font-weight:normal;color:#222;transform:scaleX(0.7789);">RP</div>
<div class="t" style="left:197.80px;top:568.27px;font-size:11.5px;line-height:11.5px;font-weight:normal;color:#222;transform:scaleX(0.9891);">None</div>
<div class="t" style="left:197.80px;top:592.27px;font-size:11.5px;line-height:11.5px;font-weight:normal;color:#222;transform:scaleX(0.9422);">Purchase price</div>
<div class="t" style="left:214.50px;top:615.27px;font-size:11.5px;line-height:11.5px;font-weight:normal;color:#222;transform:scaleX(0.9506);">0.00</div>
<div class="t" style="left:214.50px;top:639.77px;font-size:11.5px;line-height:11.5px;font-weight:normal;color:#222;transform:scaleX(0.9506);">0.00</div>
<div class="t" style="left:200.80px;top:664.27px;font-size:11.5px;line-height:11.5px;font-weight:normal;color:#222;transform:scaleX(0.9519);">12/11/2015</div>
<div class="t" style="left:238.30px;top:720.27px;font-size:11.5px;line-height:11.5px;font-weight:normal;color:#222;transform:scaleX(0.8350);">15.99</div>
<div class="t" style="left:242.50px;top:744.27px;font-size:11.5px;line-height:11.5px;font-weight:normal;color:#222;transform:scaleX(0.9324);">0.00</div>
<div class="t" style="left:242.50px;top:768.27px;font-size:11.5px;line-height:11.5px;font-weight:normal;color:#222;transform:scaleX(0.9324);">0.00</div>
<div class="t" style="left:516.00px;top:349.27px;font-size:11.5px;line-height:11.5px;font-weight:normal;color:#222;transform:scaleX(0.9278);">0.00</div>
<div class="t" style="left:471.40px;top:558.67px;font-size:11.5px;line-height:11.5px;font-weight:normal;color:#222;transform:scaleX(0.9272);">Never</div>
<div class="t" style="left:881.40px;top:483.77px;font-size:11.5px;line-height:11.5px;font-weight:normal;color:#222;transform:scaleX(1.0167);">0</div>
<div class="a" style="left:1021px;top:0;width:3px;height:796px;background:#fff"></div>
</body></html>
